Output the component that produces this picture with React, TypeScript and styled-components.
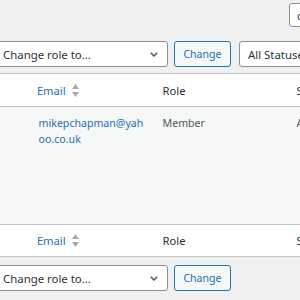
import styled, { createGlobalStyle } from 'styled-components';

const GlobalStyle = createGlobalStyle`
  html, body {
    margin: 0;
    padding: 0;
  }
  body {
    background: #f0f0f1;
    font-family: "Noto Sans", "Liberation Sans", sans-serif;
    font-size: 10.6px;
    color: #50575e;
  }
`;

const Page = styled.div`
  width: 300px;
  height: 300px;
  overflow: hidden;
`;

const Inner = styled.div`
  width: 430px;
  margin-left: -6px;
`;

const SearchRow = styled.div`
  display: flex;
  padding: 3px 0 0 295px;
`;

const SearchBox = styled.div`
  box-sizing: border-box;
  width: 150px;
  height: 24px;
  display: flex;
  align-items: center;
  padding: 0 7px;
  background: #fff;
  border: 1px solid #8c8f94;
  border-radius: 3px;
  font-size: 11.4px;
  color: #2c3338;
`;

const TableNav = styled.div<{ $top: number }>`
  display: flex;
  align-items: center;
  margin-top: ${(p) => p.$top}px;
`;

const Select = styled.div<{ $width: number }>`
  box-sizing: border-box;
  width: ${(p) => p.$width}px;
  height: 26px;
  display: flex;
  align-items: center;
  justify-content: space-between;
  padding: 0 9px 0 8px;
  background: #fff;
  border: 1px solid #8c8f94;
  border-radius: 3px;
  font-size: 11.4px;
  color: #2c3338;
  white-space: nowrap;
`;

const Button = styled.div`
  box-sizing: border-box;
  width: 57px;
  height: 26px;
  margin: 0 8px 0 6px;
  display: flex;
  align-items: center;
  justify-content: center;
  background: #f6f7f7;
  border: 1px solid #2271b1;
  border-radius: 3px;
  color: #2271b1;
  font-size: 10.6px;
`;

const Table = styled.table`
  width: 420px;
  margin-top: 6px;
  table-layout: fixed;
  border-collapse: separate;
  border-spacing: 0;
  background: #fff;
  border: 1px solid #c3c4c7;
`;

const HeadCell = styled.th<{ $foot?: boolean }>`
  padding: 0;
  text-align: left;
  font-weight: 400;
  ${(p) =>
    p.$foot ? 'border-top: 1px solid #c3c4c7;' : 'border-bottom: 1px solid #c3c4c7;'}
`;

const HeadInner = styled.div<{ $pad: number; $height: number }>`
  height: ${(p) => p.$height}px;
  display: flex;
  align-items: center;
  gap: 6px;
  padding-left: ${(p) => p.$pad}px;
  font-size: 11.2px;
  color: #2c3338;
`;

const SortLink = styled.span`
  color: #2271b1;
`;

const Row = styled.tr`
  background: #f6f7f7;
`;

const Cell = styled.td`
  height: 117px;
  box-sizing: border-box;
  vertical-align: top;
  padding: 7.5px 8.6px;
  line-height: 16.7px;
  overflow-wrap: anywhere;
  color: #50575e;
`;

const EmailLink = styled.span`
  color: #2271b1;
`;

const Chevron = () => (
  <svg width="8" height="5" viewBox="0 0 8 5">
    <path d="M0.8 0.8 L4 4 L7.2 0.8" fill="none" stroke="#50575e" strokeWidth="1.5" />
  </svg>
);

const SortIcon = () => (
  <svg width="7" height="13" viewBox="0 0 7 13">
    <path d="M3.5 0 L7 5 L0 5 Z" fill="#a7aaad" />
    <path d="M0 8 L7 8 L3.5 13 Z" fill="#a7aaad" />
  </svg>
);

const HeaderCells = ({ foot, height }: { foot?: boolean; height: number }) => (
  <tr>
    <HeadCell $foot={foot}>
      <HeadInner $pad={8.6} $height={height} />
    </HeadCell>
    <HeadCell $foot={foot}>
      <HeadInner $pad={6.9} $height={height}>
        <SortLink>Email</SortLink>
        <SortIcon />
      </HeadInner>
    </HeadCell>
    <HeadCell $foot={foot}>
      <HeadInner $pad={8.6} $height={height}>Role</HeadInner>
    </HeadCell>
    <HeadCell $foot={foot}>
      <HeadInner $pad={8.6} $height={height}>Status</HeadInner>
    </HeadCell>
  </tr>
);

const BulkActions = ({ top, filter }: { top: number; filter?: boolean }) => (
  <TableNav $top={top}>
    <Select $width={174}>
      <span>Change role to…</span>
      <Chevron />
    </Select>
    <Button>Change</Button>
    {filter && (
      <Select $width={130}>
        <span>All Statuses</span>
        <Chevron />
      </Select>
    )}
  </TableNav>
);

export default function App() {
  return (
    <Page>
      <GlobalStyle />
      <Inner>
        <SearchRow>
          <SearchBox>chapman</SearchBox>
        </SearchRow>
        <BulkActions top={14} filter />
        <Table>
          <colgroup>
            <col style={{ width: 35 }} />
            <col style={{ width: 124 }} />
            <col style={{ width: 134 }} />
            <col />
          </colgroup>
          <thead>
            <HeaderCells height={32} />
          </thead>
          <tbody>
            <Row>
              <Cell />
              <Cell>
                <EmailLink>mikepchapman@yahoo.co.uk</EmailLink>
              </Cell>
              <Cell>Member</Cell>
              <Cell>Active</Cell>
            </Row>
          </tbody>
          <tfoot>
            <HeaderCells foot height={31} />
          </tfoot>
        </Table>
        <BulkActions top={8} />
      </Inner>
    </Page>
  );
}
